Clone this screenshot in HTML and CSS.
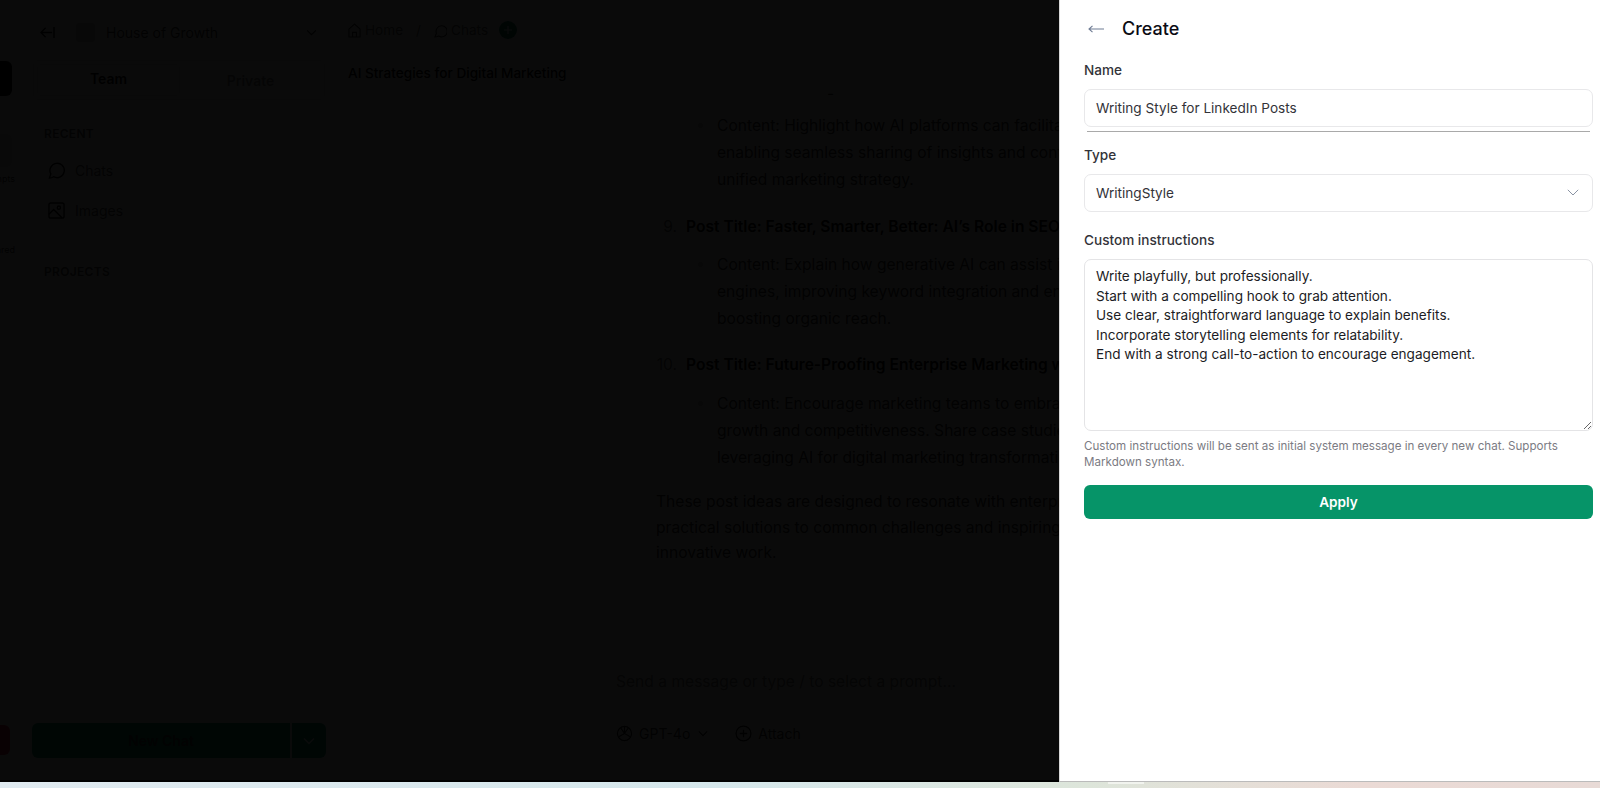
FILE: index.html
```html
<!DOCTYPE html>
<html lang="en">
<head>
<meta charset="utf-8">
<title>Create</title>
<link rel="stylesheet" href="styles.css">
</head>
<body>
<div class="screen">
  <div class="app">
    <nav class="rail">
      <div class="rail-logo"></div>
      <div class="rail-item rail-item-active">
        <div class="rail-icon"></div>
        <span>Prompts</span>
      </div>
      <div class="rail-item rail-item-second">
        <span>Shared</span>
      </div>
      <div class="rail-spacer"></div>
      <div class="rail-avatar"></div>
    </nav>

    <aside class="sidebar">
      <div class="workspace">
        <svg class="ws-back" viewBox="0 0 16 14" fill="none" stroke="#111" stroke-width="1.5"><path d="M15 1v12M13 7H1M6 2 1 7l5 5"/></svg>
        <div class="ws-logo"></div>
        <span class="ws-name">House of Growth</span>
        <svg class="ws-chevron" viewBox="0 0 12 8" fill="none" stroke="#222" stroke-width="1.4"><path d="m1 1.5 5 5 5-5"/></svg>
      </div>
      <div class="tabs">
        <div class="tab tab-active">Team</div>
        <div class="tab">Private</div>
      </div>
      <div class="side-heading side-heading-recent">RECENT</div>
      <div class="side-link">
        <svg viewBox="0 0 18 18" fill="none" stroke="#111" stroke-width="1.5"><path d="M1.5 17 3 12.6A7.6 7.6 0 1 1 6 15.6C4.6 16.6 3 17 1.5 17Z"/></svg>
        <span>Chats</span>
      </div>
      <div class="side-link">
        <svg viewBox="0 0 18 18" fill="none" stroke="#111" stroke-width="1.5"><rect x="1" y="1" width="16" height="16" rx="2"/><circle cx="11.5" cy="6" r="1.7"/><path d="m1 13 5-5 9 9"/></svg>
        <span>Images</span>
      </div>
      <div class="side-heading side-heading-projects">PROJECTS</div>
      <div class="side-fill"></div>
      <div class="new-chat">
        <button class="new-chat-main">New Chat</button>
        <button class="new-chat-more"><svg viewBox="0 0 12 8" fill="none" stroke="#fff" stroke-width="1.4"><path d="m1 1.5 5 5 5-5"/></svg></button>
      </div>
    </aside>

    <main class="main">
      <div class="crumbs">
        <svg class="crumb-icon" viewBox="0 0 14 16" fill="none" stroke="#333" stroke-width="1.2"><path d="M1 6.5 7 1l6 5.5V15H1ZM5 15v-5h4v5"/></svg>
        <span>Home</span>
        <span class="crumb-sep">/</span>
        <svg class="crumb-icon" viewBox="0 0 14 16" fill="none" stroke="#333" stroke-width="1.2"><path d="M1 15 2.6 11A6 6 0 1 1 5 14C3.800 14.700 2.400 15 1 15Z"/></svg>
        <span>Chats</span>
        <div class="crumb-add"><svg viewBox="0 0 10 10" fill="none" stroke="#fff" stroke-width="1.2"><path d="M5 1v8M1 5h8"/></svg></div>
      </div>
      <h1 class="chat-title">AI Strategies for Digital Marketing</h1>
      <div class="chat">
        <div class="chat-stub">-</div>
        <ul class="bullets bullets-first">
          <li>Content: Highlight how AI platforms can facilitate<br>enabling seamless sharing of insights and content<br>unified marketing strategy.</li>
        </ul>
        <div class="post"><span class="post-num">9.</span><strong>Post Title: Faster, Smarter, Better: AI’s Role in SEO</strong></div>
        <ul class="bullets">
          <li>Content: Explain how generative AI can assist in<br>engines, improving keyword integration and enhancing<br>boosting organic reach.</li>
        </ul>
        <div class="post"><span class="post-num">10.</span><strong>Post Title: Future-Proofing Enterprise Marketing with</strong></div>
        <ul class="bullets">
          <li>Content: Encourage marketing teams to embrace<br>growth and competitiveness. Share case studies<br>leveraging AI for digital marketing transformation</li>
        </ul>
        <p class="closing">These post ideas are designed to resonate with enterprise<br>practical solutions to common challenges and inspiring<br>innovative work.</p>
      </div>
      <div class="composer">
        <div class="composer-text">Send a message or type / to select a prompt...</div>
        <div class="composer-tools">
          <svg class="tool-icon" viewBox="0 0 18 18" fill="none" stroke="#222" stroke-width="1.2"><circle cx="9" cy="9" r="7.500"/><path d="M9 1.500v7.500l6.500 3.700M9 9l-6.500 3.700M5 3 9 9M13 3 9 9"/></svg>
          <span>GPT-4o</span>
          <svg class="tool-chevron" viewBox="0 0 12 8" fill="none" stroke="#222" stroke-width="1.400"><path d="m1 1.500 5 5 5-5"/></svg>
          <svg class="tool-icon tool-attach" viewBox="0 0 16 16" fill="none" stroke="#222" stroke-width="1.200"><circle cx="8" cy="8" r="7"/><path d="M8 4.500v7M4.500 8h7"/></svg>
          <span>Attach</span>
        </div>
      </div>
    </main>

    <div class="scrim"></div>

    <section class="drawer">
      <header class="drawer-head">
        <svg class="drawer-back" viewBox="0 0 16 8" fill="none" stroke="#6f7c94" stroke-width="1.100"><path d="M16 4H1M4.500.8 1 4l3.500 3.200"/></svg>
        <h2>Create</h2>
      </header>
      <div class="label">Name</div>
      <div class="field">Writing Style for LinkedIn Posts</div>
      <div class="field-rule"></div>
      <div class="label label-type">Type</div>
      <div class="field field-select">
        <span>WritingStyle</span>
        <svg viewBox="0 0 12 7" fill="none" stroke="#8a93a3" stroke-width="1"><path d="m.8.8 5.200 5.200L11.200.8"/></svg>
      </div>
      <div class="label label-custom">Custom instructions</div>
      <textarea class="instructions" spellcheck="false">Write playfully, but professionally.
Start with a compelling hook to grab attention.
Use clear, straightforward language to explain benefits.
Incorporate storytelling elements for relatability.
End with a strong call-to-action to encourage engagement.</textarea>
      <p class="hint">Custom instructions will be sent as initial system message in every new chat. Supports Markdown syntax.</p>
      <button class="apply">Apply</button>
    </section>
  </div>
  <div class="strip"><div class="strip-tab"></div></div>
</div>
</body>
</html>
```

FILE: styles.css
```css
* { box-sizing: border-box; }

html, body {
  margin: 0;
  padding: 0;
  height: 100%;
  overflow: hidden;
}

body {
  font-family: Inter, "Liberation Sans", sans-serif;
  color: #111;
  background: #fff;
}

.screen {
  height: 788px;
  display: flex;
  flex-direction: column;
}

.app {
  position: relative;
  height: 782px;
  display: flex;
  overflow: hidden;
  background: #fff;
}

/* far-left rail, scrolled mostly out of view */
.rail {
  width: 25px;
  flex: none;
  display: flex;
  flex-direction: column;
  align-items: flex-end;
  padding: 61px 12px 27px 0;
  overflow: hidden;
  border-right: 1px solid #eee;
}

.rail-logo {
  width: 36px;
  height: 35px;
  flex: none;
  border-radius: 6px;
  background: #000;
}

.rail-item {
  width: 60px;
  flex: none;
  margin-top: 38px;
  display: flex;
  flex-direction: column;
  align-items: flex-end;
  font-size: 9px;
  color: #333;
}

.rail-item-second { margin-top: 54px; }

.rail-icon {
  width: 34px;
  height: 33px;
  border-radius: 5px;
  background: #e4e4e4;
}

.rail-item span {
  margin-top: 6px;
  margin-right: -3px;
  white-space: nowrap;
}

.rail-spacer { flex: 1; }

.rail-avatar {
  width: 30px;
  height: 30px;
  flex: none;
  margin-right: 2px;
  border-radius: 6px;
  background: #e11d48;
}

/* workspace sidebar */
.sidebar {
  width: 308px;
  flex: none;
  display: flex;
  flex-direction: column;
  padding: 23px 6px 24px 7px;
  border-right: 1px solid #eee;
}

.workspace {
  height: 18px;
  display: flex;
  align-items: center;
  padding-left: 8px;
}

.ws-back { width: 15px; height: 13px; flex: none; }

.ws-logo {
  width: 19px;
  height: 19px;
  flex: none;
  margin-left: 21px;
  border-radius: 3px;
  background: #bbb;
}

.ws-name {
  margin-left: 11px;
  flex: 1;
  font-size: 14px;
  color: #444;
}

.ws-chevron { width: 11px; height: 7px; flex: none; margin-right: 9px; }

.tabs {
  height: 40px;
  margin: 19px 1px 0;
  padding: 3px;
  display: flex;
  border: 1px solid #ddd;
  border-radius: 6px;
  font-size: 14px;
  font-weight: 600;
  color: #888;
}

.tab {
  flex: 1;
  display: flex;
  align-items: center;
  justify-content: center;
  border-radius: 4px;
}

.tab-active { color: #111; border: 1px solid #e4e4e4; padding-bottom: 3px; }

.side-heading {
  padding-left: 12px;
  font-size: 12px;
  line-height: 16px;
  font-weight: 600;
  color: #555;
  letter-spacing: .3px;
}

.side-heading-recent { margin-top: 26px; }

.side-heading-projects { margin-top: 44px; }

.side-link {
  height: 20px;
  margin-top: 20px;
  display: flex;
  align-items: center;
  gap: 10px;
  padding-left: 16px;
  font-size: 14px;
  color: #555;
}

.side-heading-recent + .side-link { margin-top: 18px; }

.side-link svg { width: 17px; height: 17px; flex: none; }

.side-fill { flex: 1; }

.new-chat {
  height: 35px;
  display: flex;
  gap: 2px;
}

.new-chat-main,
.new-chat-more {
  border: 0;
  background: #059669;
  color: #333;
  font: 600 14px Inter, "Liberation Sans", sans-serif;
}

.new-chat-main { flex: 1; border-radius: 6px 0 0 6px; }

.new-chat-more {
  width: 34px;
  border-radius: 0 6px 6px 0;
  display: flex;
  align-items: center;
  justify-content: center;
}

.new-chat-more svg { width: 12px; height: 8px; }

/* chat column */
.main {
  flex: 1;
  min-width: 0;
  display: flex;
  flex-direction: column;
  padding-left: 15px;
  overflow: hidden;
}

.crumbs {
  height: 18px;
  margin-top: 21px;
  display: flex;
  align-items: center;
  font-size: 13.600px;
  color: #666;
  flex: none;
}

.crumb-icon { width: 13px; height: 15px; flex: none; margin-right: 4px; }

.crumb-sep { margin: 0 13px; }

.crumb-add {
  width: 18px;
  height: 18px;
  margin-left: 11px;
  display: flex;
  align-items: center;
  justify-content: center;
  border-radius: 50%;
  background: #007a55;
}

.crumb-add svg { width: 10px; height: 10px; }

.chat-title {
  margin: 24px 0 0;
  flex: none;
  font-size: 13.600px;
  line-height: 20px;
  font-weight: 500;
  color: #000;
}

.chat {
  flex: 1;
  min-height: 0;
  margin-right: 541px;
  padding-left: 308px;
  overflow: hidden;
  font-size: 15.600px;
  line-height: 27.200px;
  color: #333;
  white-space: nowrap;
}

.chat-stub { height: 18px; padding-left: 171px; line-height: 16px; margin-top: 3px; }

.bullets {
  margin: 0;
  padding: 0 0 0 61px;
  list-style: none;
}

.bullets-first { margin-top: 8px; }

.bullets li { position: relative; }

.bullets li::before {
  content: "";
  position: absolute;
  left: -19px;
  top: 11px;
  width: 5px;
  height: 5px;
  border-radius: 50%;
  background: #bbb;
}

.post {
  display: flex;
  margin-top: 19px;
  margin-bottom: 11px;
  color: #000;
}

.post-num {
  width: 30px;
  text-align: right;
  padding-right: 9px;
  color: #666;
  flex: none;
}

.post strong { font-weight: 600; }

.closing { margin: 18px 0 0; line-height: 25.500px; }

.composer {
  height: 108px;
  flex: none;
  margin: 0 0 25px 251px;
  width: 734px;
  padding: 22px 16px 0;
  border: 1px solid #eee;
  border-radius: 8px;
  font-size: 14px;
  color: #777;
}

.composer-text { line-height: 20px; font-size: 15.600px; }

.composer-tools {
  margin-top: 33px;
  display: flex;
  align-items: center;
  color: #333;
}

.tool-icon { width: 17px; height: 17px; flex: none; margin-right: 6px; }

.tool-chevron { width: 10px; height: 7px; margin-left: 8px; }

.tool-attach { margin-left: 27px; }

/* dim layer over the app, under the drawer */
.scrim {
  position: absolute;
  inset: 0 0 2px 0;
  background: rgba(0, 0, 0, .96);
}

.app::after {
  content: "";
  position: absolute;
  left: 0;
  right: 0;
  bottom: 0;
  height: 2px;
  background: #000;
}

/* right-hand drawer */
.drawer {
  position: absolute;
  z-index: 1;
  top: 0;
  right: 0;
  bottom: 0;
  width: 541px;
  padding: 1px 7px 0 24px;
  background: #fff;
  border-left: 1px solid #d8d8d8;
  border-bottom: 1px solid #bbb;
  font-size: 13.600px;
}

.drawer-head {
  height: 56px;
  margin-bottom: -1px;
  display: flex;
  align-items: center;
}

.drawer-back { width: 16px; height: 8px; flex: none; margin-left: 4px; }

.drawer-head h2 {
  margin: 0 0 0 18px;
  font-size: 18px;
  font-weight: 500;
  line-height: 24px;
  color: #0b0b14;
}

.label {
  height: 20px;
  margin-top: 4px;
  font-size: 13.600px;
  line-height: 20px;
  font-weight: 500;
  color: #333339;
}

.label-type { margin-top: 13px; }

.label-custom { margin-top: 18px; }

.field {
  height: 38px;
  margin-top: 9px;
  padding: 0 0 1px 11px;
  display: flex;
  align-items: center;
  border: 1px solid #e8e8ea;
  border-radius: 7px;
  color: #333339;
}

.field-select { justify-content: space-between; padding-right: 13px; }

.field-select svg { width: 12px; height: 7px; flex: none; }

.field-rule {
  height: 1px;
  margin: 4px 3px 0;
  background: #a9a9a9;
}

.instructions {
  display: block;
  width: 100%;
  height: 172px;
  margin-top: 9px;
  padding: 7px 11px;
  border: 1px solid #e4e4e6;
  border-radius: 7px;
  outline: 0;
  font: 13.600px/19.500px Inter, "Liberation Sans", sans-serif;
  color: #1c1c24;
  resize: vertical;
}

.hint {
  margin: 8px 0 0;
  font-size: 11.600px;
  line-height: 15.500px;
  color: #7b7b83;
}

.apply {
  display: block;
  width: 100%;
  height: 34px;
  margin-top: 15px;
  padding-bottom: 2px;
  border: 0;
  border-radius: 6px;
  background: #069468;
  color: #fff;
  font: 600 13.600px Inter, "Liberation Sans", sans-serif;
}

/* sliver of the wallpaper below the window */
.strip {
  height: 6px;
  flex: none;
  position: relative;
  background: linear-gradient(90deg, #dfe9ef 0%, #d4e6ea 45%, #dde5da 68%, #ebdad5 85%, #e8dad6 100%);
}

.strip-tab {
  position: absolute;
  left: 1108px;
  top: 0;
  width: 36px;
  height: 2px;
  background: #f1f3ee;
}
```
